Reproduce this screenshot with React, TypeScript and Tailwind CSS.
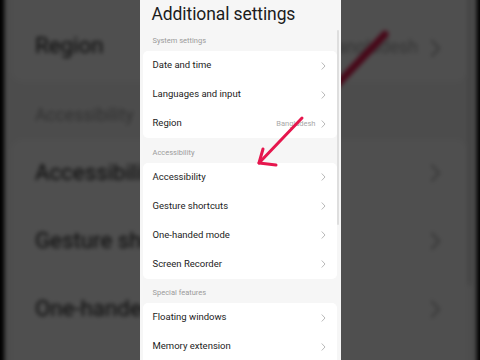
import React from "react";

type Row = { title: string; value?: string };
type Section = { label: string; rows: Row[] };

const sections: Section[] = [
  {
    label: "System settings",
    rows: [{ title: "Date and time" }, { title: "Languages and input" }, { title: "Region", value: "Bangladesh" }],
  },
  {
    label: "Accessibility",
    rows: [
      { title: "Accessibility" },
      { title: "Gesture shortcuts" },
      { title: "One-handed mode" },
      { title: "Screen Recorder" },
    ],
  },
  {
    label: "Special features",
    rows: [{ title: "Floating windows" }, { title: "Memory extension" }, { title: "Battery" }],
  },
];

function Chevron() {
  return (
    <svg width="5" height="8" viewBox="0 0 5 8" className="shrink-0">
      <polyline points="1,0.8 4,4 1,7.2" fill="none" stroke="#b9b9b9" strokeWidth="1" strokeLinecap="round" strokeLinejoin="round" />
    </svg>
  );
}

function Arrow() {
  return (
    <svg className="pointer-events-none absolute left-0 top-0" width="201" height="360" viewBox="0 0 201 360">
      <g fill="none" stroke="#e6164d" strokeWidth="3" strokeLinecap="round" strokeLinejoin="round">
        <path d="M162 118 L119 163" />
        <path d="M123 149 L119 163 L136 165" />
      </g>
    </svg>
  );
}

function Phone() {
  return (
    <div className="relative h-[360px] w-[201px] shrink-0 overflow-hidden bg-[#f6f6f6] font-['Roboto',sans-serif] text-[#1c1c1c]">
      <div className="h-[27px] pl-[12px] pt-[1px] text-[17.5px] leading-[26px] tracking-[-0.1px]">Additional settings</div>
      {sections.map((s, i) => (
        <div key={s.label}>
          <div className={`flex items-end pl-[13px] pb-[5px] text-[7.5px] leading-[10px] text-[#9b9b9b] ${i === 0 ? "h-[24px]" : "h-[24.5px]"}`}>
            {s.label}
          </div>
          <div className="ml-[3px] mr-[4px] rounded-[5px] bg-white">
            {s.rows.map((r) => (
              <div key={r.title} className="flex h-[29px] items-center pl-[10px] pr-[11px]">
                <span className="flex-1 text-[9.5px]">{r.title}</span>
                {r.value && <span className="mr-[5px] text-[7.5px] text-[#a8a8a8]">{r.value}</span>}
                <Chevron />
              </div>
            ))}
          </div>
        </div>
      ))}
      <div className="absolute right-[2px] top-[30px] h-[195px] w-[2px] rounded-full bg-[#dedede]" />
      <Arrow />
    </div>
  );
}

export default function App() {
  return (
    <div className="relative flex h-[360px] w-[480px] items-center justify-center overflow-hidden bg-black">
      <div className="absolute inset-0 flex items-center justify-center">
        <div className="scale-[2.35] blur-[1px] brightness-[0.31]">
          <Phone />
        </div>
      </div>
      <div className="relative">
        <Phone />
      </div>
    </div>
  );
}
